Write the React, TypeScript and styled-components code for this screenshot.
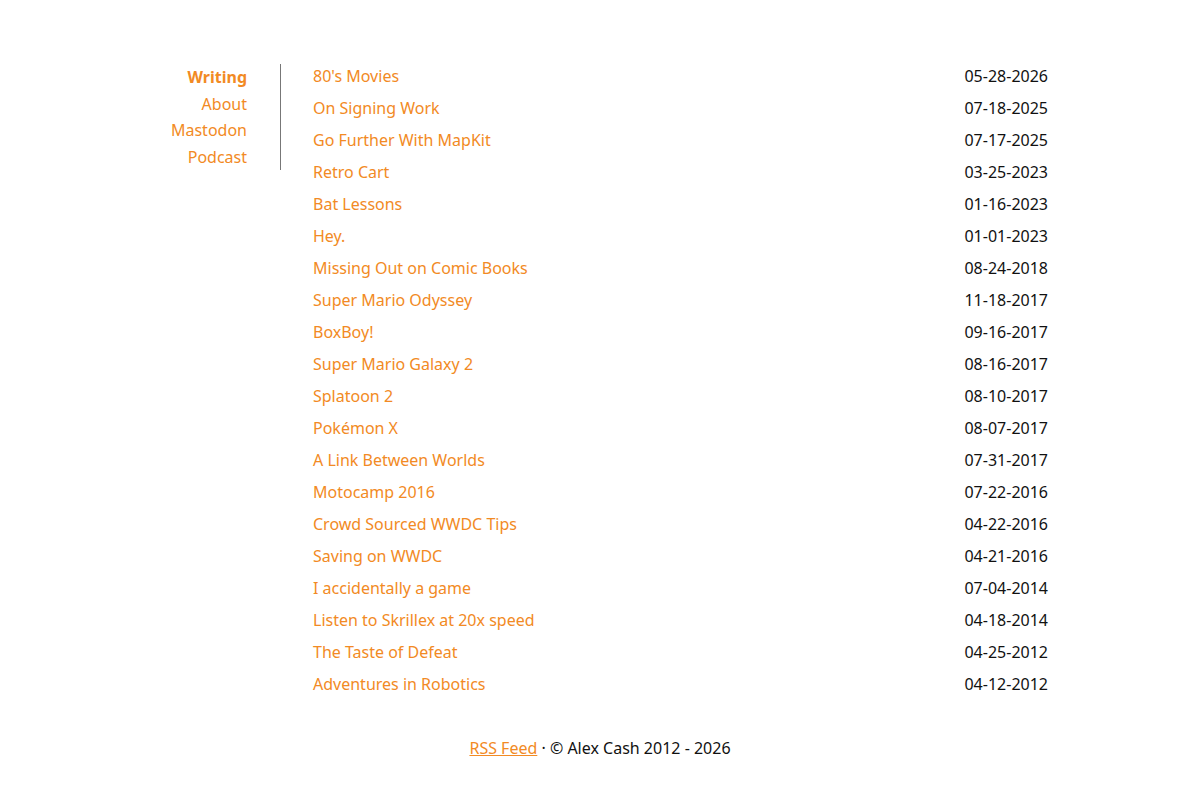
import React from 'react'
import styled, { createGlobalStyle } from 'styled-components'

const GlobalStyle = createGlobalStyle`
  body {
    margin: 0;
    background: #ffffff;
    font-family: 'Noto Sans', 'Open Sans', sans-serif;
    font-size: 16px;
    color: #111111;
  }
  a {
    color: #f28a24;
    text-decoration: none;
  }
`

const Page = styled.div`
  width: 960px;
  margin: 0 auto;
  padding-top: 64px;
`

const Main = styled.div`
  display: flex;
  align-items: flex-start;
`

const Nav = styled.nav`
  width: 161px;
  flex-shrink: 0;
  box-sizing: border-box;
  padding-right: 33px;
  border-right: 1px solid #777777;
  text-align: right;
  display: flex;
  flex-direction: column;
`

const NavLink = styled.a<{ $active?: boolean }>`
  line-height: 26.5px;
  font-weight: ${(p) => (p.$active ? 700 : 400)};
`

const PostList = styled.ul`
  flex: 1;
  list-style: none;
  margin: 0;
  padding: 0 32px;
`

const PostRow = styled.li`
  display: flex;
  justify-content: space-between;
  line-height: 24px;
  margin-bottom: 8px;
`

const PostDate = styled.span`
  color: #111111;
`

const Footer = styled.footer`
  margin-top: 32px;
  text-align: center;
  line-height: 24px;
  padding-bottom: 40px;

  a {
    text-decoration: underline;
  }
`

const posts = [
  ["80's Movies", '05-28-2026'],
  ['On Signing Work', '07-18-2025'],
  ['Go Further With MapKit', '07-17-2025'],
  ['Retro Cart', '03-25-2023'],
  ['Bat Lessons', '01-16-2023'],
  ['Hey.', '01-01-2023'],
  ['Missing Out on Comic Books', '08-24-2018'],
  ['Super Mario Odyssey', '11-18-2017'],
  ['BoxBoy!', '09-16-2017'],
  ['Super Mario Galaxy 2', '08-16-2017'],
  ['Splatoon 2', '08-10-2017'],
  ['Pokémon X', '08-07-2017'],
  ['A Link Between Worlds', '07-31-2017'],
  ['Motocamp 2016', '07-22-2016'],
  ['Crowd Sourced WWDC Tips', '04-22-2016'],
  ['Saving on WWDC', '04-21-2016'],
  ['I accidentally a game', '07-04-2014'],
  ['Listen to Skrillex at 20x speed', '04-18-2014'],
  ['The Taste of Defeat', '04-25-2012'],
  ['Adventures in Robotics', '04-12-2012'],
]

const App = () => {
  return (
    <>
      <GlobalStyle />
      <Page>
        <Main>
          <Nav>
            <NavLink href='#' $active>
              Writing
            </NavLink>
            <NavLink href='#'>About</NavLink>
            <NavLink href='#'>Mastodon</NavLink>
            <NavLink href='#'>Podcast</NavLink>
          </Nav>
          <PostList>
            {posts.map(([title, date]) => (
              <PostRow key={title}>
                <a href='#'>{title}</a>
                <PostDate>{date}</PostDate>
              </PostRow>
            ))}
          </PostList>
        </Main>
        <Footer>
          <a href='#'>RSS Feed</a> · © Alex Cash 2012 - 2026
        </Footer>
      </Page>
    </>
  )
}

export default App
